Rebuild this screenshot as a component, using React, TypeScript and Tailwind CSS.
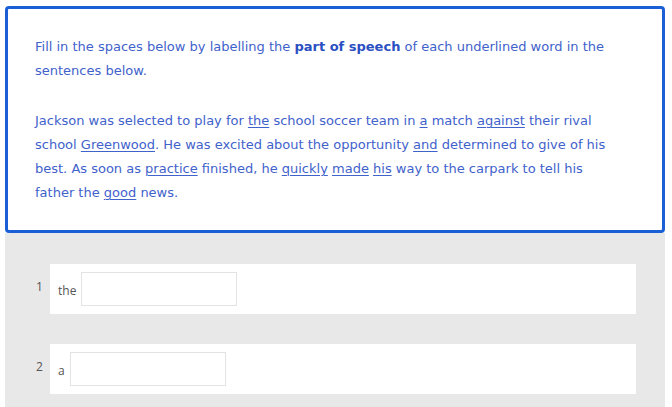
const U = ({ children }: { children: React.ReactNode }) => (
  <span className="underline underline-offset-2 decoration-1">{children}</span>
);

const Row = ({ n, word }: { n: number; word: string }) => (
  <div className="flex items-start">
    <div className="w-[45px] pl-[31px] pt-[14px] text-[12px] text-[#555]">{n}</div>
    <div className="flex-1 bg-white h-[50px] flex items-center px-2 gap-[5px]">
      <span className="text-[12px] text-[#555] pt-[4px]">{word}</span>
      <input
        type="text"
        className="w-[156px] h-[34px] border border-[#e3e3e3] bg-white outline-none"
      />
    </div>
  </div>
);

export default function App() {
  return (
    <div className="min-h-screen bg-white font-['Open_Sans',sans-serif]">
      <div className="ml-[5px] w-[660px] pt-[6px]">
        <div className="border-[3px] border-[#1b5fd7] rounded-[4px] bg-white pl-[27px] pr-[40px] pt-[26px] pb-[25px] text-[13px] leading-[24px] text-[#3f62cb] font-['DejaVu_Sans',sans-serif]">
          <p>
            Fill in the spaces below by labelling the{" "}
            <strong className="font-bold text-[#2a4fc2]">part of speech</strong> of each underlined
            word in the sentences below.
          </p>
          <p className="mt-[26px]">
            Jackson was selected to play for <U>the</U> school soccer team in <U>a</U> match{" "}
            <U>against</U> their rival school <U>Greenwood</U>. He was excited about the
            opportunity <U>and</U> determined to give of his best. As soon as <U>practice</U>{" "}
            finished, he <U>quickly</U> <U>made</U> <U>his</U> way to the carpark to tell his
            father the <U>good</U> news.
          </p>
        </div>
        <div className="bg-[#e8e8e8] pt-[31px] pr-[29px] pb-[30px] flex flex-col gap-[30px]">
          <Row n={1} word="the" />
          <Row n={2} word="a" />
        </div>
      </div>
    </div>
  );
}
